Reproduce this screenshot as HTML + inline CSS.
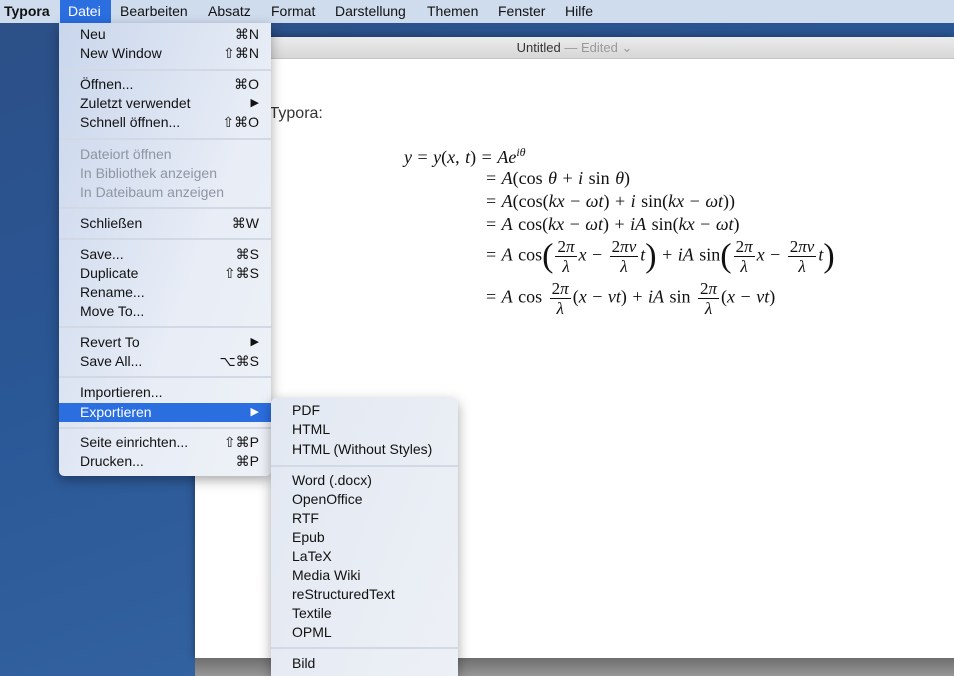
<!DOCTYPE html>
<html><head><meta charset="utf-8"><style>
*{margin:0;padding:0;box-sizing:border-box}
html{width:954px;height:676px;overflow:hidden}
body{width:954px;height:676px;overflow:hidden;position:relative;font-family:"Liberation Sans",sans-serif;background:linear-gradient(160deg,#2c4f86 0%,#2a5796 40%,#3a6aa8 100%)}
.bar{position:absolute;left:0;top:0;width:954px;height:23px;background:#cfdcee;font-size:14px;color:#111}
.bar span{position:absolute;top:3px}
.win{position:absolute;left:195px;top:37px;width:759px;height:621px;background:#fff;box-shadow:0 0 8px rgba(0,0,0,.4)}
.tb{height:22px;background:linear-gradient(#ecebec,#d8d7d8);border-bottom:1px solid #c4c4c4;font-size:13px;text-align:center;line-height:22px;color:#333}
.bottom{position:absolute;left:195px;top:658px;width:759px;height:18px;background:linear-gradient(#6e6e6e,#979797)}
.menu{position:absolute;background:linear-gradient(110deg,#c9d6ec,#e8edf6 60%,#eef1f7);border-radius:0 0 5px 5px;box-shadow:0 4px 12px rgba(0,0,0,.35);font-size:14px;color:#111;overflow:hidden}
.it{position:absolute;left:0;right:0;height:19px;line-height:19px;padding-left:21px}
.it .k{position:absolute;right:12px;top:0}
.dis{color:#8e95a3}
.sep{position:absolute;left:0;right:0;height:2px;background:#d2d9e4}
.hl{background:#2a6ee0;color:#fff}
.m{position:absolute;font-family:"Liberation Serif",serif;font-size:18px;color:#111;white-space:nowrap;word-spacing:1px}
i{font-style:italic}
.fr{display:inline-block;vertical-align:middle;text-align:center;font-size:17px;line-height:19px;margin:0 2px}
.fr b{display:block;font-weight:normal;border-bottom:1px solid #111;padding:0 2px}
.big{font-size:34px;vertical-align:middle;line-height:30px}
</style></head><body>
<div class="bar">
<span style="left:4px;font-weight:bold">Typora</span>
<div style="position:absolute;left:60px;top:0;width:51px;height:23px;background:#2a6ee0"></div>
<span style="left:68px;color:#fff">Datei</span>
<span style="left:120px">Bearbeiten</span>
<span style="left:208px">Absatz</span>
<span style="left:271px">Format</span>
<span style="left:335px">Darstellung</span>
<span style="left:427px">Themen</span>
<span style="left:498px">Fenster</span>
<span style="left:565px">Hilfe</span>
</div>
<div class="win">
<div class="tb">Untitled <span style="color:#999">— Edited ⌄</span></div>
<div style="position:absolute;left:57px;top:68px;font-size:16px;color:#333">In Typora:</div>
</div>
<div class="bottom"></div>
<div class="m" style="left:404px;top:145px"><i>y</i> = <i>y</i>(<i>x</i>, <i>t</i>) = <i>Ae<sup style="font-size:12px">iθ</sup></i></div>
<div class="m" style="left:486px;top:168px">= <i>A</i>(cos <i>θ</i> + <i>i</i> sin <i>θ</i>)</div>
<div class="m" style="left:486px;top:191px">= <i>A</i>(cos(<i>kx</i> − <i>ωt</i>) + <i>i</i> sin(<i>kx</i> − <i>ωt</i>))</div>
<div class="m" style="left:486px;top:214px">= <i>A</i> cos(<i>kx</i> − <i>ωt</i>) + <i>iA</i> sin(<i>kx</i> − <i>ωt</i>)</div>
<div class="m" style="left:486px;top:237px">= <i>A</i> cos<span class="big">(</span><span class="fr"><b>2<i>π</i></b><i>λ</i></span><i>x</i> − <span class="fr"><b>2<i>πv</i></b><i>λ</i></span><i>t</i><span class="big">)</span> + <i>iA</i> sin<span class="big">(</span><span class="fr"><b>2<i>π</i></b><i>λ</i></span><i>x</i> − <span class="fr"><b>2<i>πv</i></b><i>λ</i></span><i>t</i><span class="big">)</span></div>
<div class="m" style="left:486px;top:279px">= <i>A</i> cos <span class="fr"><b>2<i>π</i></b><i>λ</i></span>(<i>x</i> − <i>vt</i>) + <i>iA</i> sin <span class="fr"><b>2<i>π</i></b><i>λ</i></span>(<i>x</i> − <i>vt</i>)</div>

<div class="menu" style="left:59px;top:23px;width:212px;height:453px">
<div class="it" style="top:2px">Neu<span class="k">⌘N</span></div>
<div class="it" style="top:21px">New Window<span class="k">⇧⌘N</span></div>
<div class="sep" style="top:46px"></div>
<div class="it" style="top:52px">Öffnen...<span class="k">⌘O</span></div>
<div class="it" style="top:71px">Zuletzt verwendet<span class="k" style="font-size:11px">▶</span></div>
<div class="it" style="top:90px">Schnell öffnen...<span class="k">⇧⌘O</span></div>
<div class="sep" style="top:115px"></div>
<div class="it dis" style="top:122px">Dateiort öffnen</div>
<div class="it dis" style="top:141px">In Bibliothek anzeigen</div>
<div class="it dis" style="top:160px">In Dateibaum anzeigen</div>
<div class="sep" style="top:184px"></div>
<div class="it" style="top:191px">Schließen<span class="k">⌘W</span></div>
<div class="sep" style="top:215px"></div>
<div class="it" style="top:222px">Save...<span class="k">⌘S</span></div>
<div class="it" style="top:241px">Duplicate<span class="k">⇧⌘S</span></div>
<div class="it" style="top:260px">Rename...</div>
<div class="it" style="top:279px">Move To...</div>
<div class="sep" style="top:303px"></div>
<div class="it" style="top:310px">Revert To<span class="k" style="font-size:11px">▶</span></div>
<div class="it" style="top:329px">Save All...<span class="k">⌥⌘S</span></div>
<div class="sep" style="top:353px"></div>
<div class="it" style="top:360px">Importieren...</div>
<div class="it hl" style="top:380px">Exportieren<span class="k" style="font-size:11px">▶</span></div>
<div class="sep" style="top:404px"></div>
<div class="it" style="top:410px">Seite einrichten...<span class="k">⇧⌘P</span></div>
<div class="it" style="top:429px">Drucken...<span class="k">⌘P</span></div>
</div>

<div class="menu" style="left:271px;top:398px;width:187px;height:278px;border-radius:5px 5px 0 0;background:linear-gradient(110deg,#e2e8f2,#edf0f6)">
<div class="it" style="top:3px">PDF</div>
<div class="it" style="top:22px">HTML</div>
<div class="it" style="top:42px">HTML (Without Styles)</div>
<div class="sep" style="top:67px"></div>
<div class="it" style="top:73px">Word (.docx)</div>
<div class="it" style="top:92px">OpenOffice</div>
<div class="it" style="top:111px">RTF</div>
<div class="it" style="top:130px">Epub</div>
<div class="it" style="top:149px">LaTeX</div>
<div class="it" style="top:168px">Media Wiki</div>
<div class="it" style="top:187px">reStructuredText</div>
<div class="it" style="top:206px">Textile</div>
<div class="it" style="top:225px">OPML</div>
<div class="sep" style="top:249px"></div>
<div class="it" style="top:256px">Bild</div>
</div>
</body></html>
